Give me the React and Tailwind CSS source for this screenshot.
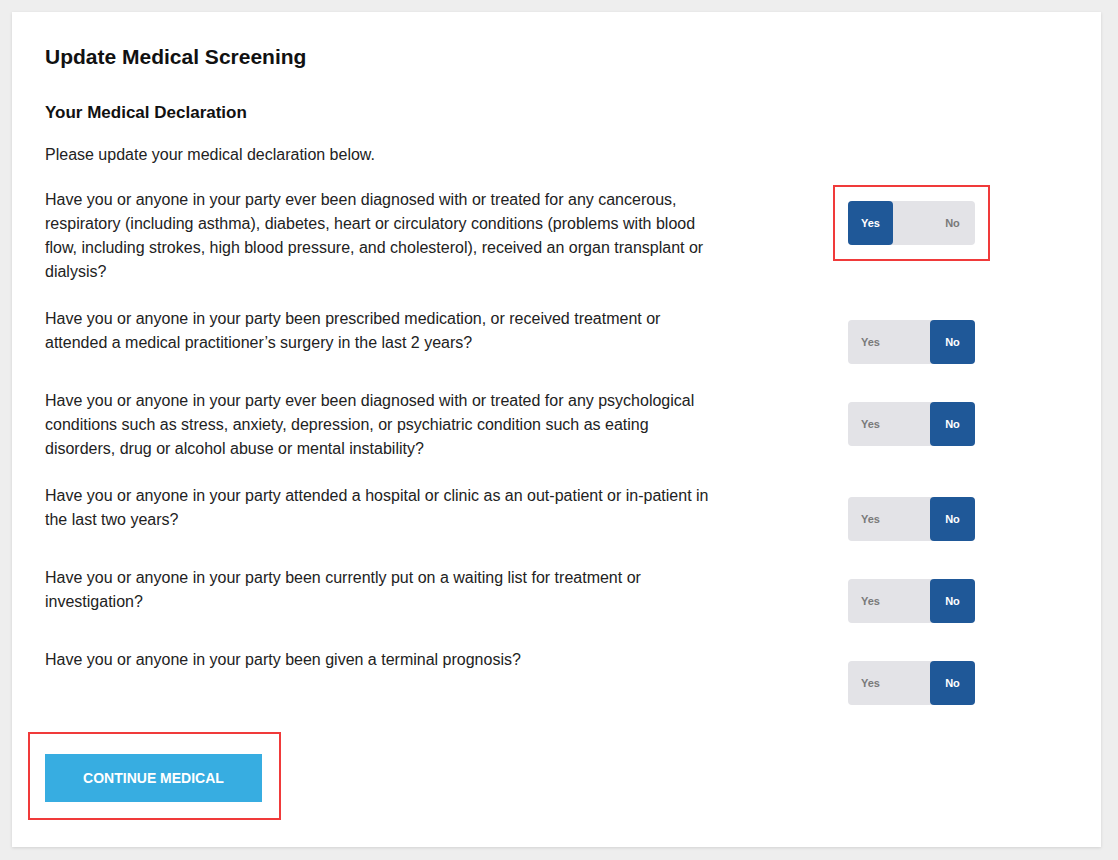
import React from 'react';

const questions = [
  {
    text: 'Have you or anyone in your party ever been diagnosed with or treated for any cancerous, respiratory (including asthma), diabetes, heart or circulatory conditions (problems with blood flow, including strokes, high blood pressure, and cholesterol), received an organ transplant or dialysis?',
    value: 'yes',
    highlight: true,
  },
  {
    text: 'Have you or anyone in your party been prescribed medication, or received treatment or attended a medical practitioner\u2019s surgery in the last 2 years?',
    value: 'no',
  },
  {
    text: 'Have you or anyone in your party ever been diagnosed with or treated for any psychological conditions such as stress, anxiety, depression, or psychiatric condition such as eating disorders, drug or alcohol abuse or mental instability?',
    value: 'no',
  },
  {
    text: 'Have you or anyone in your party attended a hospital or clinic as an out-patient or in-patient in the last two years?',
    value: 'no',
  },
  {
    text: 'Have you or anyone in your party been currently put on a waiting list for treatment or investigation?',
    value: 'no',
  },
  {
    text: 'Have you or anyone in your party been given a terminal prognosis?',
    value: 'no',
  },
];

// Yes / No segmented toggle
const YesNo = ({ value }) => (
  <div className="flex h-[44px] w-[127px] rounded-[4px] bg-[#e3e3e7] text-[11px] font-bold">
    <div
      className={
        value === 'yes'
          ? 'flex w-[45px] items-center justify-center rounded-[4px] bg-[#1f5898] text-white'
          : 'flex w-[45px] items-center justify-center text-[#7a7a7a]'
      }
    >
      Yes
    </div>
    <div className="flex-1" />
    <div
      className={
        value === 'no'
          ? 'flex w-[45px] items-center justify-center rounded-[4px] bg-[#1f5898] text-white'
          : 'flex w-[45px] items-center justify-center text-[#7a7a7a]'
      }
    >
      No
    </div>
  </div>
);

const Question = ({ text, value, highlight }) => (
  <div className="flex items-start">
    <p className="w-[668px] text-[16px] leading-[24px] text-[#222]">{text}</p>
    <div className="relative ml-[135px] mt-[13px] mb-[2px]">
      {highlight && (
        <div className="pointer-events-none absolute left-[-15px] top-[-16px] h-[76px] w-[157px] border-2 border-[#f03a3a]" />
      )}
      <YesNo value={value} />
    </div>
  </div>
);

export default function App() {
  return (
    <div
      className="min-h-[860px] bg-[#eeeeee] pl-[12px] pt-[12px]"
      style={{ fontFamily: '"Liberation Sans", Arial, sans-serif' }}
    >
      <div className="h-[835px] w-[1089px] bg-white pl-[33px] pt-[33px] shadow-[0_1px_3px_rgba(0,0,0,0.12)]">
        <h1 className="text-[21px] font-bold leading-[24px] text-[#111]">Update Medical Screening</h1>
        <h2 className="mt-[32px] text-[17px] font-bold leading-[24px] text-[#111]">Your Medical Declaration</h2>
        <p className="mt-[18px] text-[16px] leading-[24px] text-[#222]">Please update your medical declaration below.</p>

        <div className="mt-[21px] flex flex-col gap-[23px]">
          {questions.map((q, i) => (
            <Question key={i} {...q} />
          ))}
        </div>

        <div className="relative mt-[47px] inline-block">
          <div className="pointer-events-none absolute left-[-17px] top-[-22px] h-[88px] w-[253px] border-2 border-[#f03a3a]" />
          <button className="h-[48px] w-[217px] bg-[#37ade1] text-[14px] font-bold text-white">
            CONTINUE MEDICAL
          </button>
        </div>
      </div>
    </div>
  );
}
